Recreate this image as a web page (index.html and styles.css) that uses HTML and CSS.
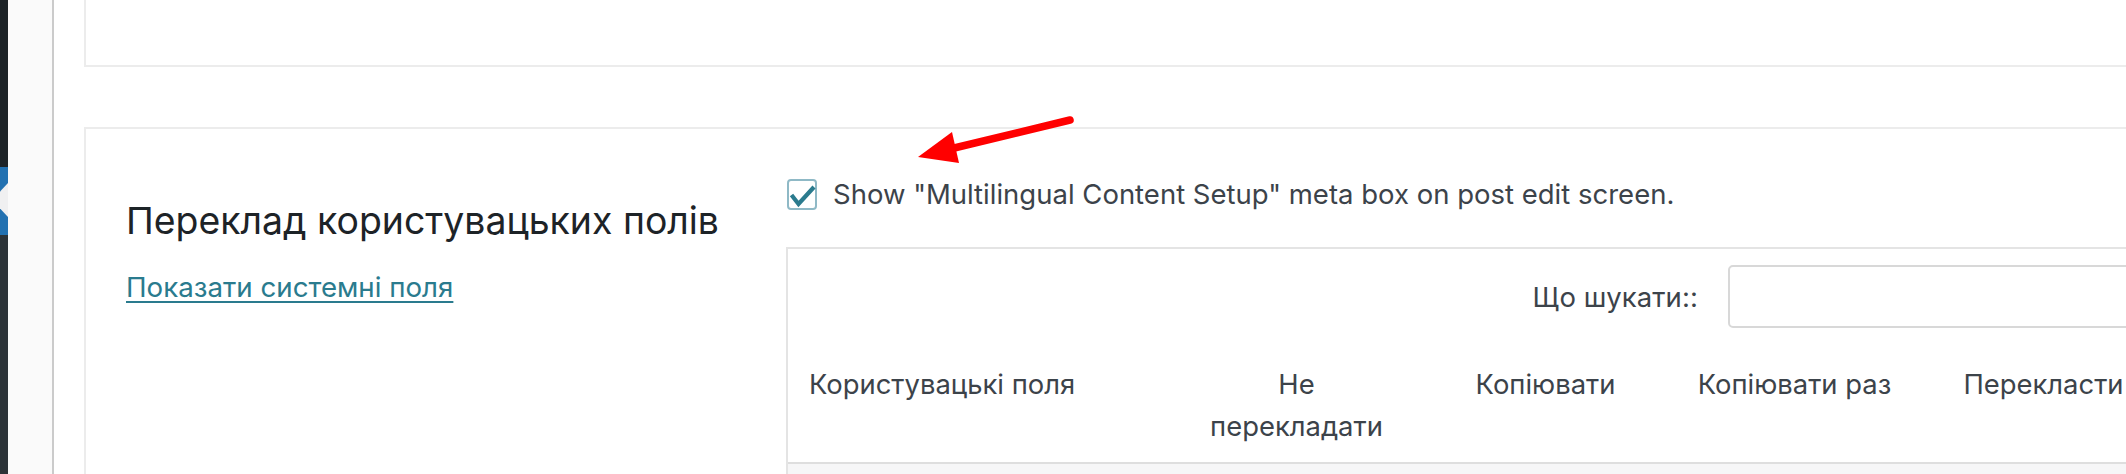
FILE: index.html
```html
<!DOCTYPE html>
<html lang="uk">
<head>
<meta charset="utf-8">
<title>WPML — Переклад користувацьких полів</title>
<link rel="stylesheet" href="styles.css">
</head>
<body>
<div class="page">
  <nav class="admin-menu">
    <div class="menu-top"></div>
    <div class="menu-current"><span class="menu-arrow"></span></div>
    <div class="menu-rest"></div>
  </nav>
  <div class="sub-strip"></div>
  <main class="content">
    <section class="card card-top"></section>
    <section class="card card-main">
      <div class="card-left">
        <h2 class="section-title">Переклад користувацьких полів</h2>
        <a class="sys-link" href="#">Показати системні поля</a>
      </div>
      <div class="card-right">
        <label class="check-row">
          <span class="checkbox">
            <svg viewBox="0 0 30 31" width="30" height="31"><path d="M4.5 16 L11.5 25 L27 8" fill="none" stroke="#2b7b8e" stroke-width="4.2" stroke-linejoin="miter" stroke-linecap="butt"/></svg>
          </span>
          <span class="check-text">Show "Multilingual Content Setup" meta box on post edit screen.</span>
        </label>
        <div class="cf-table">
          <div class="search-row">
            <span class="search-label">Що шукати::</span>
            <span class="search-input"></span>
          </div>
          <div class="head-row">
            <div class="hcell hcell-name">Користувацькі поля</div>
            <div class="hcell">Не<br>перекладати</div>
            <div class="hcell">Копіювати</div>
            <div class="hcell">Копіювати раз</div>
            <div class="hcell">Перекласти</div>
          </div>
          <div class="body-row"></div>
        </div>
      </div>
    </section>
  </main>
  <svg class="annot-arrow" viewBox="0 0 200 80" width="200" height="80">
    <line x1="170" y1="20" x2="50" y2="49" stroke="#ff0000" stroke-width="7.5" stroke-linecap="round"/>
    <polygon points="18,57 52,32 59,63" fill="#ff0000"/>
  </svg>
</div>
</body>
</html>
```

FILE: styles.css
```css
* { box-sizing: border-box; }
html, body { margin: 0; padding: 0; }
body {
  width: 2126px;
  height: 474px;
  overflow: hidden;
  background: #ffffff;
  font-family: Inter, Roboto, "Noto Sans", "Liberation Sans", sans-serif;
}
.page {
  position: relative;
  display: flex;
  width: 2126px;
  height: 474px;
  overflow: hidden;
}
.admin-menu {
  width: 8px;
  flex: none;
  display: flex;
  flex-direction: column;
  background: #2c3338;
}
.menu-top { height: 167px; background: #1d2327; }
.menu-current {
  position: relative;
  height: 68px;
  background: #2271b1;
}
.menu-arrow {
  position: absolute;
  right: 0;
  top: 16px;
  width: 0;
  height: 0;
  border-top: 17px solid transparent;
  border-bottom: 17px solid transparent;
  border-right: 16px solid #f0f0f1;
}
.menu-rest { flex: 1; background: #2c3338; }
.sub-strip {
  width: 46px;
  flex: none;
  background: #fafafa;
  border-right: 2px solid #cbcbcb;
}
.content {
  flex: 1;
  min-width: 0;
  overflow: hidden;
  padding-left: 30px;
  display: flex;
  flex-direction: column;
}
.card {
  background: #fff;
  border: 2px solid #ececec;
  margin-right: -60px;
}
.card-top {
  flex: none;
  height: 67px;
  border-top: none;
}
.card-main {
  flex: none;
  margin-top: 60px;
  display: flex;
  padding-top: 50px;
  height: 400px;
  border-bottom: none;
}
.card-left {
  width: 700px;
  flex: none;
  padding-left: 40px;
  padding-top: 18px;
}
.section-title {
  margin: 0;
  font-size: 37.4px;
  line-height: 47px;
  font-weight: 400;
  color: #1d2327;
  white-space: nowrap;
}
.sys-link {
  display: inline-block;
  margin-top: 25px;
  font-size: 27.7px;
  line-height: 36px;
  color: #2a7b8e;
  text-decoration: underline;
  text-decoration-thickness: 2px;
  text-underline-offset: 4px;
}
.card-right {
  flex: none;
  width: 1400px;
}
.check-row {
  display: flex;
  align-items: center;
  gap: 16px;
  height: 31px;
  margin-left: 1px;
}
.checkbox {
  width: 30px;
  height: 31px;
  flex: none;
  border: 2px solid #8fb9c6;
  border-radius: 4px;
  position: relative;
  background: #fff;
}
.checkbox svg {
  position: absolute;
  left: -2px;
  top: -2px;
}
.check-text {
  font-size: 27.5px;
  line-height: 31px;
  color: #3c434a;
  white-space: nowrap;
}
.cf-table {
  margin-top: 37px;
  width: 1384px;
  border: 2px solid #e4e4e4;
  border-right: none;
  border-bottom: none;
  height: 230px;
  display: flex;
  flex-direction: column;
}
.search-row {
  display: flex;
  align-items: center;
  justify-content: flex-end;
  gap: 30px;
  padding-top: 16px;
  padding-right: 22px;
}
.search-label {
  font-size: 27.5px;
  line-height: 36px;
  letter-spacing: 0.1px;
  color: #3c434a;
}
.search-input {
  width: 420px;
  height: 63px;
  border: 2px solid #d8d8d8;
  border-radius: 5px;
  background: #fff;
}
.head-row {
  display: grid;
  grid-template-columns: 384px 249px 249px 249px 249px;
  padding-top: 35px;
  padding-bottom: 15px;
  border-bottom: 2px solid #dedede;
}
.hcell {
  font-size: 27.4px;
  line-height: 42px;
  color: #3c434a;
  text-align: center;
  white-space: nowrap;
}
.hcell-name {
  text-align: left;
  padding-left: 21px;
}
.body-row {
  flex: 1;
  background: #f6f6f7;
}
.annot-arrow {
  position: absolute;
  left: 900px;
  top: 100px;
}
```
